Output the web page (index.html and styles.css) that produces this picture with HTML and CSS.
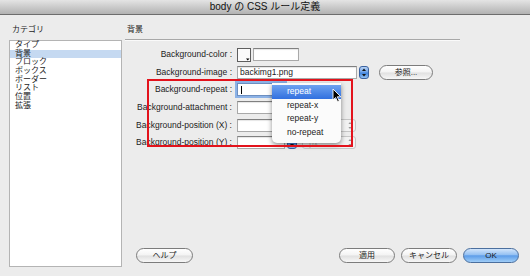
FILE: index.html
```html
<!DOCTYPE html>
<html>
<head>
  <title>body の CSS ルール定義</title>
  <link rel="stylesheet" href="styles.css">
</head>
<body>
  <div class="window">
    <div class="titlebar">body の CSS ルール定義</div>
    <div class="main">
      <div class="category">
        <div class="caption">カテゴリ</div>
        <ul class="category-list">
          <li>タイプ</li>
          <li class="selected">背景</li>
          <li>ブロック</li>
          <li>ボックス</li>
          <li>ボーダー</li>
          <li>リスト</li>
          <li>位置</li>
          <li>拡張</li>
        </ul>
      </div>
      <div class="panel">
        <div class="panel-title">背景</div>
        <div class="form">
          <label>Background-color :</label>
          <div class="controls">
            <span class="color-well">
              <svg width="14" height="14" viewBox="0 0 14 14"><rect x="0.5" y="0.5" width="13" height="13" fill="#fbfbfb" stroke="#5e5e5e"/><path d="M9 10.5h3.5l-1.75 2z" fill="#000"/></svg>
            </span>
            <div class="field w-color"></div>
          </div>

          <label>Background-image :</label>
          <div class="controls">
            <div class="field w-image">backimg1.png</div>
            <span class="stepper"><svg width="8" height="11" viewBox="0 0 8 11"><path d="M4 1.5l2 2.6H2zM4 9.5l2-2.6H2z" fill="#111"/></svg></span>
            <button class="btn browse">参照...</button>
          </div>

          <label>Background-repeat :</label>
          <div class="controls">
            <div class="field w-short focused"><span class="caret"></span></div>
            <span class="stepper"><svg width="8" height="11" viewBox="0 0 8 11"><path d="M4 1.5l2 2.6H2zM4 9.5l2-2.6H2z" fill="#111"/></svg></span>
          </div>

          <label>Background-attachment :</label>
          <div class="controls">
            <div class="field w-short"></div>
            <span class="stepper"><svg width="8" height="11" viewBox="0 0 8 11"><path d="M4 1.5l2 2.6H2zM4 9.5l2-2.6H2z" fill="#111"/></svg></span>
          </div>

          <label>Background-position (X) :</label>
          <div class="controls">
            <div class="field w-short"></div>
            <span class="stepper"><svg width="8" height="11" viewBox="0 0 8 11"><path d="M4 1.5l2 2.6H2zM4 9.5l2-2.6H2z" fill="#111"/></svg></span>
            <span class="unit"><span class="unit-text"></span><svg width="6" height="11" viewBox="0 0 6 11"><path d="M3 2l1.6 2H1.4zM3 9l1.6-2H1.4z" fill="#9a9a9a"/></svg></span>
          </div>

          <label>Background-position (Y) :</label>
          <div class="controls">
            <div class="field w-short"></div>
            <span class="stepper"><svg width="8" height="11" viewBox="0 0 8 11"><path d="M4 1.5l2 2.6H2zM4 9.5l2-2.6H2z" fill="#111"/></svg></span>
            <span class="unit"><span class="unit-text">px</span><svg width="6" height="11" viewBox="0 0 6 11"><path d="M3 2l1.6 2H1.4zM3 9l1.6-2H1.4z" fill="#9a9a9a"/></svg></span>
          </div>
        </div>

        <div class="buttons">
          <button class="btn help">ヘルプ</button>
          <div class="spacer"></div>
          <button class="btn">適用</button>
          <button class="btn">キャンセル</button>
          <button class="btn btn-default">OK</button>
        </div>
      </div>
    </div>

    <!-- open popup of Background-repeat -->
    <ul class="popup-menu">
      <li class="active">repeat</li>
      <li>repeat-x</li>
      <li>repeat-y</li>
      <li>no-repeat</li>
    </ul>
    <div class="highlight-box"></div>
    <svg class="cursor" width="10" height="15" viewBox="0 0 10 15"><path d="M1 1v11l2.6-2.5 2 4.3 1.7-.8-2-4.2H8.8z" fill="#000" stroke="#fff" stroke-width="0.9" stroke-linejoin="round"/></svg>
  </div>
</body>
</html>
```

FILE: styles.css
```css
body {
  margin: 0;
  background-color: #ececec;
  font-family: "Liberation Sans", "Noto Sans CJK JP", sans-serif;
  color: #1c1c1c;
}
.window {
  position: relative;
  width: 530px;
  height: 276px;
  overflow: hidden;
}
.titlebar {
  height: 14px;
  line-height: 14px;
  text-align: center;
  font-size: 10px;
  color: #111;
  background: linear-gradient(#e4e4e4, #b2b2b2);
  border-bottom: 1px solid #6d6d6d;
}
.main {
  display: flex;
  height: 261px;
  box-sizing: border-box;
  padding: 9px 11px 9px 9px;
}
.category {
  width: 113px;
  display: flex;
  flex-direction: column;
}
.caption {
  font-size: 8px;
  line-height: 12px;
  padding-left: 3px;
  margin-bottom: 4px;
}
.category-list {
  flex: 1;
  margin: 0;
  padding: 0;
  list-style: none;
  background-color: white;
  border: 1px solid #b4b4b4;
}
.category-list li {
  font-size: 8px;
  line-height: 8.7px;
  height: 8.7px;
  padding-left: 5px;
}
.category-list li.selected {
  background-color: #c5d9f1;
}
.panel {
  flex: 1;
  margin-left: 3px;
  display: flex;
  flex-direction: column;
}
.panel-title {
  width: 333px;
  font-size: 8px;
  line-height: 12px;
  padding: 0 0 3px 2px;
  border-bottom: 1px solid #a8a8a8;
  box-shadow: 0 1px 0 #fafafa;
}
.form {
  display: grid;
  grid-template-columns: 107px auto;
  grid-auto-rows: 13px;
  column-gap: 5px;
  row-gap: 4.7px;
  margin-top: 8px;
  align-items: center;
}
.form label {
  text-align: right;
  font-size: 8.5px;
  line-height: 13px;
  white-space: nowrap;
}
.controls {
  display: flex;
  align-items: center;
  height: 13px;
}
.field {
  height: 13px;
  box-sizing: border-box;
  background-color: white;
  border: 1px solid #a9a9a9;
  border-top-color: #808080;
  box-shadow: inset 0 1px 1px rgba(0,0,0,0.1);
  font-size: 8.5px;
  line-height: 11px;
  padding-left: 2px;
  white-space: nowrap;
  overflow: hidden;
}
.w-color {
  width: 46px;
  margin-left: 2px;
}
.w-image {
  width: 120px;
}
.w-short {
  width: 48px;
}
.focused {
  border-color: #6d8fc0;
  box-shadow: 0 0 0 2px #8cb2e6;
  display: flex;
  align-items: center;
}
.caret {
  width: 1px;
  height: 8px;
  background-color: #000;
  margin-left: 1px;
}
.color-well {
  display: flex;
  width: 14px;
  height: 14px;
}
.stepper {
  display: flex;
  align-items: center;
  justify-content: center;
  width: 10px;
  height: 13px;
  box-sizing: border-box;
  margin-left: 2px;
  border: 1px solid #3a62a0;
  border-radius: 3px;
  background: linear-gradient(#b7d3f6, #6fa3e8 45%, #3f82dc 55%, #94c2f3);
}
.unit {
  display: flex;
  align-items: center;
  justify-content: space-between;
  width: 54px;
  height: 13px;
  box-sizing: border-box;
  margin-left: 5px;
  padding: 0 2px 0 6px;
  border: 1px solid #c6c6c6;
  border-radius: 3px;
  background-color: #f2f2f2;
  color: #b4b4b4;
  font-size: 8.5px;
}
.btn {
  height: 15px;
  width: 56px;
  padding: 0;
  box-sizing: border-box;
  border: 1px solid #7c7c7c;
  border-radius: 8px;
  background: linear-gradient(#ffffff, #f3f3f3 48%, #e0e0e0 52%, #f7f7f7);
  font-family: "Liberation Sans", "Noto Sans CJK JP", sans-serif;
  font-size: 8px;
  line-height: 13px;
  color: #1c1c1c;
}
.browse {
  width: 54px;
  margin-left: 10px;
}
.buttons {
  margin-top: auto;
  margin-bottom: 4px;
  display: flex;
  align-items: center;
  gap: 6px;
  padding-left: 11px;
}
.help {
  width: 57px;
}
.spacer {
  flex: 1;
}
.btn-default {
  border-color: #4b6f9e;
  background: linear-gradient(#d2e5fb, #94c0f2 45%, #5d9de9 52%, #9fcdf7);
}
.popup-menu {
  position: absolute;
  left: 272px;
  top: 83px;
  width: 69px;
  height: 60px;
  box-sizing: border-box;
  margin: 0;
  padding: 2px 0 0;
  list-style: none;
  background-color: #fbfbfb;
  border-radius: 0 0 5px 5px;
  box-shadow: 0 2px 5px rgba(0,0,0,0.45);
}
.popup-menu li {
  height: 13.6px;
  line-height: 13.6px;
  padding-left: 15px;
  font-size: 8.5px;
}
.popup-menu li.active {
  background: linear-gradient(#6ea2f0, #3170df);
  color: white;
}
.highlight-box {
  position: absolute;
  left: 147px;
  top: 79px;
  width: 206px;
  height: 68px;
  box-sizing: border-box;
  border: 2px solid #e3131c;
}
.cursor {
  position: absolute;
  left: 332px;
  top: 88px;
}
```
